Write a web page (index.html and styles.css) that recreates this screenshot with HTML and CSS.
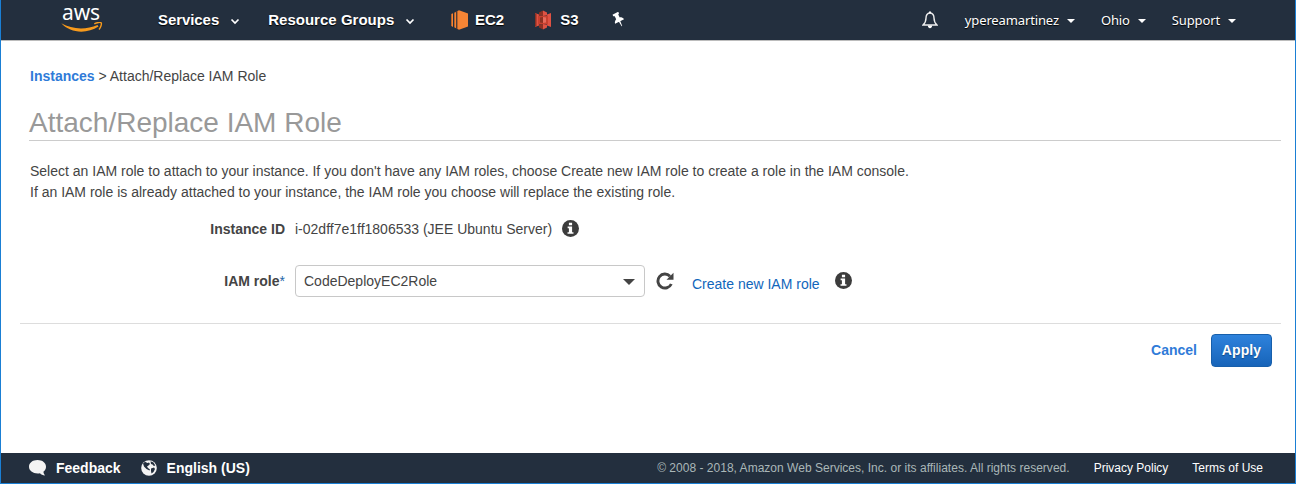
FILE: index.html
```html
<!DOCTYPE html>
<html lang="en">
<head>
<meta charset="utf-8">
<title>Attach/Replace IAM Role</title>
<link rel="stylesheet" href="styles.css">
</head>
<body>
<div class="window">
  <header class="topbar">
    <a class="logo"><span class="logo-text">aws</span>
      <svg class="logo-smile" width="42" height="12" viewBox="0 0 42 12"><path d="M.3 1.300C11 7.500 25 8 36.500 3l1 1.600C26 12 9.500 11.500.3 1.300z" fill="#f79a1c"/><path d="M33.300 1.800c2.700-1.500 6.300-1.700 6.900-.9.600 1-.3 4.500-2.200 6.600" fill="none" stroke="#f79a1c" stroke-width="1.400"/></svg>
    </a>
    <nav class="menu">
      <a class="services">Services<svg class="chev" width="10" height="7" viewBox="0 0 10 7"><path d="M1.500 1.500 5 5l3.500-3.500" fill="none" stroke="#fff" stroke-width="1.700"/></svg></a>
      <a class="groups">Resource Groups<svg class="chev" width="10" height="7" viewBox="0 0 10 7"><path d="M1.500 1.500 5 5l3.500-3.500" fill="none" stroke="#fff" stroke-width="1.700"/></svg></a>
    </nav>
    <a class="shortcut ec2"><svg width="18" height="20" viewBox="0 0 18 20"><path d="M8 .3 17 3.500v13L8 19.700z" fill="#f58535"/><path d="M0 4l2-.8v13.600L0 16zM3 2.700l2-.9v16.500L3 17.200zM5.700 1.300 8 .3v19.400l-2.300-1z" fill="#b9632b"/><path d="M1 3.700h1v12.800H1zM4 2.400h1v15.300H4zM7 .8h1v18.400H7z" fill="#f58535"/></svg><span>EC2</span></a>
    <a class="shortcut s3"><svg width="18" height="20" viewBox="0 0 18 20"><path d="M1 3l4 1.500v11L1 17zM17 3l-4 1.500v11l4 1.500z" fill="#e05243"/><path d="M1 3.500 2.500 3v14L1 16.500z" fill="#8c3123"/><path d="M4 5.500h10v9H4z" fill="#c9402f"/><path d="M5 2.500 9 .5V6L5 5zM5 17.500l4 2V14l-4 1z" fill="#8c3123"/><path d="m9 .5 4 2V5L9 6zM9 19.500l4-2V15l-4-1z" fill="#e05243"/><path d="M6 7.500 9 7v6l-3-.5z" fill="#8c3123"/><path d="m9 7 3 .5v5L9 13z" fill="#e86a5a"/></svg><span>S3</span></a>
    <svg class="pin" width="14" height="16" viewBox="0 0 14 16"><g transform="translate(6.300 7) rotate(-27)"><path d="M-3.200-6.500h6.400v1.800L2-4v3.200C3.600-.1 4.800 1 5 2.800H-5C-4.800 1-3.600-.1-2-.8V-4l-1.200-.7zM-.8 2.500H.8L.3 8h-.6z" fill="#fff"/></g></svg>
    <div class="account">
      <svg class="bell" width="16" height="18" viewBox="0 0 16 18"><path d="M8 1.700C5.200 2.200 4 4.300 4 7c0 4-1.200 5.500-3 7h14c-1.800-1.500-3-3-3-7 0-2.700-1.200-4.800-4-5.300z" fill="none" stroke="#eee" stroke-width="1.400"/><path d="M7 .5h2v2H7zM5.800 14.500h4.400C10 16.300 9.200 17.300 8 17.300s-2-1-2.200-2.800z" fill="#fff"/></svg>
      <a class="user">ypereamartinez<i class="tri"></i></a>
      <a class="region">Ohio<i class="tri"></i></a>
      <a class="support">Support<i class="tri"></i></a>
    </div>
  </header>

  <main class="content">
    <div class="crumbs"><a>Instances</a> &gt; <span>Attach/Replace IAM Role</span></div>
    <h1>Attach/Replace IAM Role</h1>
    <p class="intro">Select an IAM role to attach to your instance. If you don't have any IAM roles, choose Create new IAM role to create a role in the IAM console.<br>If an IAM role is already attached to your instance, the IAM role you choose will replace the existing role.</p>
    <div class="row instance">
      <span class="label">Instance ID</span>
      <span class="value">i-02dff7e1ff1806533 (JEE Ubuntu Server)</span>
      <svg class="info" width="17" height="17" viewBox="0 0 16 16"><circle cx="8" cy="8" r="8" fill="#3c3c3c"/><path d="M6.500 2.500h3V5h-3zM5.300 6.200h4.200v5.300h1.300V13H5.200v-1.500h1.300V7.700H5.300z" fill="#fff"/></svg>
    </div>
    <div class="row role">
      <span class="label">IAM role<span class="star">*</span></span>
      <div class="select"><span>CodeDeployEC2Role</span><i class="arrow"></i></div>
      <svg class="reload" width="18" height="18" viewBox="0 0 18 18"><path d="M14 4.200A7 7 0 1 0 15.300 12" fill="none" stroke="#444" stroke-width="2.900"/><path d="M17.500.8v7h-7z" fill="#444"/></svg>
      <a class="create">Create new IAM role</a>
      <svg class="info" width="17" height="17" viewBox="0 0 16 16"><circle cx="8" cy="8" r="8" fill="#3c3c3c"/><path d="M6.500 2.500h3V5h-3zM5.300 6.200h4.200v5.300h1.300V13H5.200v-1.500h1.300V7.700H5.300z" fill="#fff"/></svg>
    </div>
    <div class="actions"><a class="cancel">Cancel</a><button class="apply">Apply</button></div>
  </main>

  <footer class="bottombar">
    <svg class="bubble" width="18" height="16" viewBox="0 0 18 16"><path d="M8.500 0C13.500 0 17 2.900 17 6.700c0 2-.9 3.800-2.600 5 .2 1.500.7 2.500 1.600 3.800-2.200-.2-3.800-1-5-2.300-6 1-11-2-11-6.500C0 2.900 3.500 0 8.500 0z" fill="#f4f4f4"/></svg>
    <a class="feedback">Feedback</a>
    <svg class="globe" width="16" height="16" viewBox="0 0 16 16"><circle cx="8" cy="8" r="7.800" fill="#f4f4f4"/><path d="M2 3.500 4 1.800 6.500 3 8 2.500 9 4 7.500 5.500 6 6.500l1 1.500 2 1.500-.5 1L5.500 9 3 6.500zM9.500 1.200l3 1.300 1.800 3-1.500.5-1.300-1.500-1.500-.5zM10 8.500l3-1 1 1.500-1.500 3-2 1.500-.5-2.500z" fill="#232f3e"/></svg>
    <a class="language">English (US)</a>
    <span class="copyright">© 2008 - 2018, Amazon Web Services, Inc. or its affiliates. All rights reserved.</span>
    <a class="privacy">Privacy Policy</a>
    <a class="terms">Terms of Use</a>
  </footer>
</div>
</body>
</html>
```
FILE: styles.css
```css
* { box-sizing: border-box; }
body { margin: 0; background: #fff; font: 14px/20px "Liberation Sans", Arial, sans-serif; color: #444; }
svg { display: block; flex: none; }
.window { display: flex; flex-direction: column; width: 1296px; height: 484px; border: solid #1a7fd4; border-width: 0 1px 1px; }
.topbar { display: flex; align-items: center; height: 41px; background: #232f3e; border-bottom: 1px solid #bcbcbc; color: #fff; white-space: nowrap; }
.logo { display: flex; flex-direction: column; width: 42px; height: 40px; margin-left: 60px; }
.logo-text { height: 22px; padding-left: 1px; font: 21px/25px "Noto Sans", sans-serif; letter-spacing: -.1px; }
.menu { display: flex; width: 259px; margin-left: 55px; font-size: 15px; font-weight: bold; text-shadow: 0 1px 1px #000; }
.menu a { display: flex; align-items: center; }
.chev { margin: 3px 0 0 11px; }
.services { letter-spacing: -.07px; }
.groups { margin-left: 28px; letter-spacing: .02px; }
.shortcut { display: flex; align-items: center; font-size: 15px; font-weight: bold; text-shadow: 0 1px 1px #000; }
.ec2 { margin-left: 34px; }
.ec2 svg { margin-right: 6px; }
.s3 { margin-left: 30px; }
.s3 svg { margin-right: 8px; }
.pin { margin-left: 33px; }
.account { display: flex; align-items: center; margin-left: auto; margin-right: 59px; font: 13px/20px "Noto Sans", sans-serif; letter-spacing: -.13px; text-shadow: 0 1px 1px #000; }
.account a { display: flex; align-items: center; }
.tri { border: 4px solid transparent; border-top-color: #fff; border-bottom: 0; margin: 1px 0 0 8px; }
.user { margin-left: 27px; }
.region, .support { margin-left: 26px; }
.content { flex: 1; padding: 25px 14px 0 19px; }
.crumbs { margin-left: 10px; }
.crumbs a, .cancel { color: #2f7bd8; font-weight: bold; }
h1 { height: 35px; margin: 20px 0 0 9px; border-bottom: 1px solid #ccc; color: #999; font-size: 28px; font-weight: normal; line-height: 33px; }
.intro { margin: 20px 0 0 10px; line-height: 21px; white-space: nowrap; }
.row { display: flex; align-items: center; white-space: nowrap; }
.label { width: 265px; margin-right: 10px; text-align: right; font-weight: bold; }
.star { color: #2467a8; font-weight: normal; }
.instance { height: 20px; margin-top: 16px; }
.instance .info { margin: -1px 0 0 10px; }
.role { height: 32px; margin-top: 26px; }
.select { display: flex; align-items: center; justify-content: space-between; width: 350px; height: 32px; padding: 0 9px 0 8px; border: 1px solid #c8c8c8; border-radius: 4px; }
.arrow { margin-top: 1px; border: 6px solid transparent; border-top-color: #444; border-bottom: 0; }
.reload { margin-left: 11px; }
.create { margin: 6px 0 0 18px; color: #1166bb; }
.role .info { margin: -1px 0 0 15px; }
.actions { display: flex; align-items: center; justify-content: flex-end; margin-top: 26px; padding: 10px 9px 0 0; border-top: 1px solid #ddd; }
.cancel { margin: 0 14px 2px 0; }
.apply { width: 61px; height: 33px; padding: 0 0 1px; border: 1px solid #175fab; border-radius: 4px; background: linear-gradient(#2e82dc, #1764b9); color: #fff; font: bold 14px "Liberation Sans", Arial, sans-serif; letter-spacing: .1px; text-shadow: 0 1px 1px #114b86; }
.bottombar { display: flex; align-items: center; height: 30px; padding-left: 28px; background: #232f3e; color: #fff; white-space: nowrap; font-size: 12px; }
.feedback, .language { font-size: 14px; font-weight: bold; }
.feedback { margin-left: 9px; }
.globe { margin-left: 20px; }
.language { margin-left: 10px; }
.copyright { margin-left: auto; color: #aab7b8; letter-spacing: .015px; }
.privacy { margin-left: 24px; }
.terms { margin: 0 32px 0 24px; }
```
